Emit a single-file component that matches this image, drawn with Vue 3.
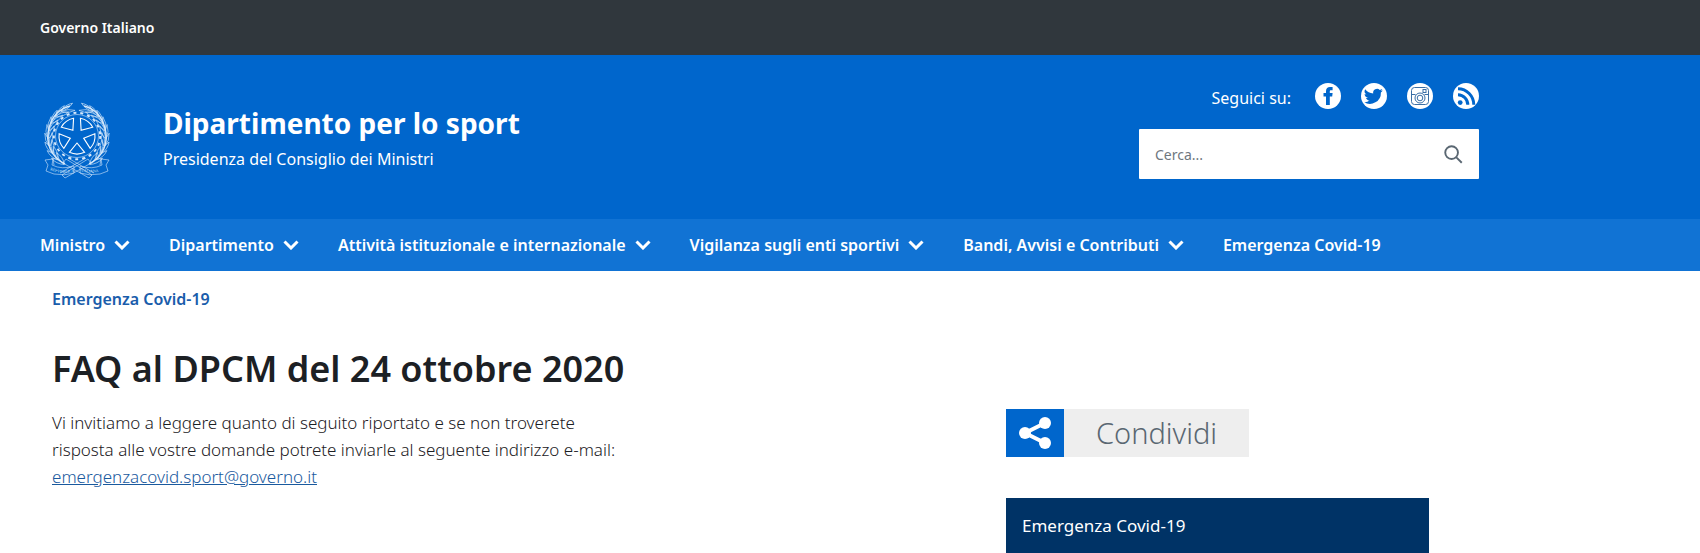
<script setup>
import { ref } from 'vue'

const search = ref('')

const menu = [
  { label: 'Ministro', sub: true },
  { label: 'Dipartimento', sub: true },
  { label: 'Attività istituzionale e internazionale', sub: true },
  { label: 'Vigilanza sugli enti sportivi', sub: true },
  { label: 'Bandi, Avvisi e Contributi', sub: true },
  { label: 'Emergenza Covid-19', sub: false }
]

// emblem: the five wedges around the star
const point = (r, deg) => {
  const a = deg * Math.PI / 180
  return `${(33 + r * Math.cos(a)).toFixed(2)} ${(33 + r * Math.sin(a)).toFixed(2)}`
}

const wedges = [0, 1, 2, 3, 4].map((i) => {
  const a = -54 + i * 72
  return `M${point(7, a)}L${point(18, a - 25)}A18 18 0 0 1 ${point(18, a + 25)}Z`
})

// emblem: the leaves of one branch, mirrored for the other one
const leaves = []
for (let i = 0; i < 9; i++) {
  const deg = 130 + i * 15
  const a = deg * Math.PI / 180
  for (const side of [-1, 1]) {
    const r = 28 + side * 2
    leaves.push({
      id: `${i}${side}`,
      at: `translate(${33 + r * Math.cos(a)} ${34 + r * 1.06 * Math.sin(a)}) rotate(${deg + 90 - side * 14})`
    })
  }
}
</script>

<template>
  <div class="page">
    <div class="topbar">
      <a href="#">Governo Italiano</a>
    </div>

    <header class="header">
      <div class="header-inner">
        <a href="#" class="brand">
          <svg class="emblem" viewBox="0 0 67 76" aria-hidden="true">
            <circle cx="33" cy="33" r="21.5" />
            <circle cx="33" cy="33" r="23.2" class="teeth" />
            <path v-for="w in wedges" :key="w" :d="w" class="wedge" />
            <g v-for="flip in [false, true]" :key="flip" :transform="flip ? 'translate(66 0) scale(-1 1)' : ''">
              <path d="M21 61C7 54 1 40 5 25C8 14 14 6 26 3" class="stem" />
              <path v-for="l in leaves" :key="l.id" d="M-7 0Q0-3 7 0Q0 3-7 0Z" :transform="l.at" />
              <path d="M22 56L48 72L45 75L19 60Z M24 55L50 70" />
              <path d="M9 56L1 57L4 62L2 68L10 71Q21 73 30 70V63Q18 67 8 62Z M9 56L10 62" />
            </g>
            <path id="ribbon-left" d="M6 67Q18 72 33 68" class="guide" />
            <path id="ribbon-right" d="M36 68Q50 72 64 66" class="guide" />
            <text><textPath href="#ribbon-left">REPVBBLICA</textPath></text>
            <text><textPath href="#ribbon-right">ITALIANA</textPath></text>
          </svg>
          <div>
            <div class="brand-title">Dipartimento per lo sport</div>
            <div class="brand-subtitle">Presidenza del Consiglio dei Ministri</div>
          </div>
        </a>

        <div class="header-tools">
          <div class="social">
            <span class="social-label">Seguici su:</span>
            <a href="#" aria-label="Facebook">
              <svg viewBox="0 0 26 26">
                <circle cx="13" cy="13" r="13" />
                <path class="blue" d="M11 22V13.5H8.5V10H11V8C11 5.2 12.6 4 15 4H17.6V7.3H16C15 7.3 14.8 7.8 14.8 8.6V10H17.6L17.2 13.5H14.8V22Z" />
              </svg>
            </a>
            <a href="#" aria-label="Twitter">
              <svg viewBox="0 0 26 26">
                <circle cx="13" cy="13" r="13" />
                <path class="blue" d="M21.8 7.5C21.1 7.8 20.4 8 19.6 8.1C20.4 7.6 21 6.9 21.3 6C20.5 6.4 19.7 6.8 18.8 6.9A3.9 3.9 0 0 0 12.2 10.4C9 10.2 6.1 8.7 4.2 6.3A3.9 3.9 0 0 0 5.4 11.5C4.8 11.5 4.1 11.3 3.6 11C3.6 12.9 5 14.5 6.8 14.8C6.2 15 5.6 15 5 14.9C5.5 16.4 7 17.5 8.6 17.5A7.8 7.8 0 0 1 3 19.1A11 11 0 0 0 19.9 9.4C20.6 8.9 21.3 8.2 21.8 7.5Z" />
              </svg>
            </a>
            <a href="#" aria-label="Instagram">
              <svg viewBox="0 0 26 26">
                <circle cx="13" cy="13" r="13" />
                <g class="line">
                  <rect x="4.5" y="4.5" width="17" height="17" rx="3" />
                  <path d="M4.5 11.5H8.5M17.5 11.5H21.5" />
                  <circle cx="13" cy="15" r="5" />
                  <circle cx="13" cy="15" r="2.8" />
                  <rect x="16" y="6.5" width="3" height="3" />
                </g>
              </svg>
            </a>
            <a href="#" aria-label="RSS">
              <svg viewBox="0 0 26 26">
                <circle cx="13" cy="13" r="13" />
                <circle cx="7.2" cy="19.6" r="2.4" class="blue" />
                <path class="arc" d="M5 11.8A10 10 0 0 1 14.8 21.8M5 5.8A16 16 0 0 1 20.8 21.8" />
              </svg>
            </a>
          </div>

          <form class="search" @submit.prevent>
            <input v-model="search" type="text" placeholder="Cerca..." aria-label="Cerca">
            <button type="submit" aria-label="Avvia la ricerca">
              <svg viewBox="0 0 20 20">
                <circle cx="8" cy="8" r="6.7" />
                <path d="M13 13L18.7 18.7" />
              </svg>
            </button>
          </form>
        </div>
      </div>
    </header>

    <nav class="menu">
      <a v-for="item in menu" :key="item.label" href="#">
        {{ item.label }}
        <svg v-if="item.sub" viewBox="0 0 16 10" aria-hidden="true">
          <path d="M1.5 1.5L8 8L14.5 1.5" />
        </svg>
      </a>
    </nav>

    <div class="content">
      <main>
        <a href="#" class="breadcrumb">Emergenza Covid-19</a>
        <h1>FAQ al DPCM del 24 ottobre 2020</h1>
        <p>
          Vi invitiamo a leggere quanto di seguito riportato e se non troverete<br>
          risposta alle vostre domande potrete inviarle al seguente indirizzo e-mail:<br>
          <a href="mailto:emergenzacovid.sport@governo.it">emergenzacovid.sport@governo.it</a>
        </p>
      </main>

      <aside>
        <button type="button" class="share">
          <span class="share-icon">
            <svg viewBox="0 0 32 32" aria-hidden="true">
              <path d="M26 6L6 16L26 26" />
              <circle cx="26" cy="6" r="6" />
              <circle cx="6" cy="16" r="6" />
              <circle cx="26" cy="26" r="6" />
            </svg>
          </span>
          <span class="share-label">Condividi</span>
        </button>
        <a href="#" class="side-title">Emergenza Covid-19</a>
      </aside>
    </div>
  </div>
</template>

<style>
body {
  background: #fff;
}
</style>

<style scoped>
.page {
  font-family: "Noto Sans", sans-serif;
  color: #1c2024;
}

.page * {
  box-sizing: border-box;
}

.topbar {
  background: #30373d;
  padding: 15px 40px;
  line-height: 25px;
}

.topbar a {
  color: #fff;
  font-size: 14px;
  font-weight: 600;
  text-decoration: none;
}

.header {
  background: #0066cc;
}

.header-inner {
  display: flex;
  justify-content: space-between;
  align-items: center;
  max-width: 1479px;
  padding: 28px 0 40px 44px;
}

.brand {
  display: flex;
  align-items: center;
  gap: 52px;
  color: #fff;
  text-decoration: none;
  padding-top: 20px;
}

.emblem {
  width: 67px;
  height: 76px;
  overflow: visible;
  fill: none;
  stroke: #d5e8fb;
  stroke-width: 0.6;
}

.emblem .teeth {
  stroke-width: 2;
  stroke-dasharray: 3 4;
}

.emblem .stem {
  stroke-width: 1.4;
}

.emblem .wedge {
  stroke: #fff;
  stroke-width: 1.1;
}

.emblem .guide {
  stroke: none;
}

.emblem text {
  font-family: "Liberation Serif", serif;
  font-size: 4px;
  fill: #d5e8fb;
  stroke: none;
}

.brand-title {
  font-size: 28px;
  font-weight: 700;
  line-height: 36px;
}

.brand-subtitle {
  font-size: 16px;
  line-height: 36px;
}

.header-tools {
  width: 340px;
}

.social {
  display: flex;
  justify-content: flex-end;
  align-items: center;
  gap: 20px;
  height: 26px;
  margin-bottom: 20px;
}

.social-label {
  color: #fff;
  font-size: 16px;
  line-height: 26px;
  padding: 4px 4px 0 0;
}

.social svg {
  display: block;
  width: 26px;
  height: 26px;
  fill: #fff;
}

.social .blue {
  fill: #0066cc;
}

.social .line {
  fill: none;
  stroke: #3a6ea5;
  stroke-width: 1;
}

.social .arc {
  fill: none;
  stroke: #0066cc;
  stroke-width: 3;
}

.search {
  display: flex;
  align-items: center;
  height: 50px;
  background: #fff;
  border-radius: 1px;
  padding: 0 16px;
}

.search input {
  flex: 1;
  min-width: 0;
  border: none;
  outline: none;
  padding: 0;
  font-family: inherit;
  font-size: 14px;
  color: #5a6772;
}

.search input::placeholder {
  color: #6f7780;
  opacity: 1;
}

.search button {
  border: none;
  background: none;
  padding: 0;
  cursor: pointer;
}

.search svg {
  display: block;
  width: 19px;
  height: 19px;
  fill: none;
  stroke: #5a6772;
  stroke-width: 2;
}

.menu {
  display: flex;
  gap: 39px;
  background: #1173d4;
  padding: 0 40px;
}

.menu a {
  display: flex;
  align-items: center;
  gap: 9px;
  color: #fff;
  font-size: 16px;
  font-weight: 600;
  line-height: 52px;
  text-decoration: none;
  white-space: nowrap;
}

.menu svg {
  width: 16px;
  height: 10px;
  fill: none;
  stroke: #fff;
  stroke-width: 3;
}

.content {
  display: grid;
  grid-template-columns: 1fr 423px;
  gap: 40px;
  max-width: 1429px;
  padding-left: 52px;
}

.breadcrumb {
  display: block;
  margin-top: 16px;
  color: #1a5dab;
  font-size: 16px;
  font-weight: 600;
  line-height: 24px;
  text-decoration: none;
}

h1 {
  margin: 32px 0 0;
  font-size: 36px;
  font-weight: 600;
  line-height: 52px;
}

p {
  margin: 14px 0 0;
  font-size: 17px;
  font-weight: 300;
  line-height: 27px;
}

p a {
  color: #1a5a9e;
}

aside {
  padding-top: 138px;
}

.share {
  display: flex;
  height: 48px;
  border: none;
  padding: 0;
  background: #eee;
  font-family: inherit;
  cursor: pointer;
}

.share-icon {
  display: flex;
  align-items: center;
  justify-content: center;
  width: 58px;
  height: 48px;
  background: #0066cc;
}

.share-icon svg {
  width: 32px;
  height: 32px;
  fill: #fff;
}

.share-icon path {
  fill: none;
  stroke: #fff;
  stroke-width: 4;
}

.share-label {
  padding: 0 32px;
  color: #5a6772;
  font-size: 29px;
  font-weight: 300;
  line-height: 48px;
}

.side-title {
  display: block;
  margin-top: 41px;
  padding: 14px 16px;
  background: #003366;
  color: #fff;
  font-size: 17px;
  line-height: 27px;
  text-decoration: none;
}
</style>
